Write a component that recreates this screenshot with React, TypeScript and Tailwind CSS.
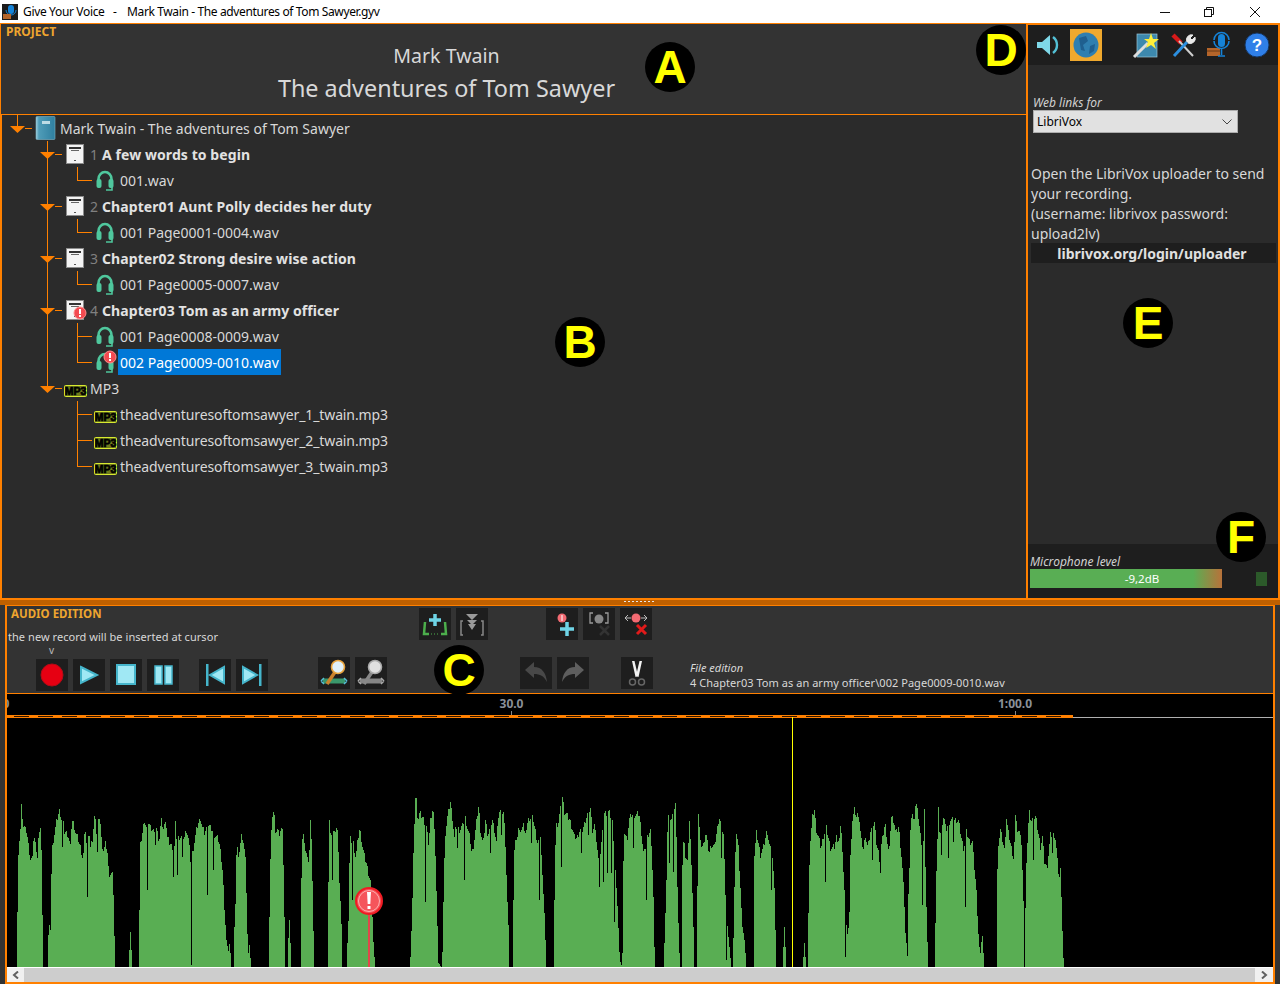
import React from "react";

const O = "#ff8000";

type Burst = [number, string];
const BURSTS: Burst[] = [
  [0, "48:560 51:395 54:215 57:180 60:150 63:80 67:120 70:150 76:130 78:155 82:180 85:205 90:240 94:240 97:210 100:165 104:190 108:210 112:240 115:150 120:140 123:210 126:405 129:560"],
  [0, "144:465 148:425 150:450 152:310 156:200 160:175 168:125 172:110 178:90 182:115 186:200 188:125 192:155 200:160 205:175 210:200 214:120 220:130 225:155 232:175 240:200 248:240 254:135 258:190 262:350 266:150 270:205 276:180 284:90 288:160 292:215 298:105 304:190 310:215 314:190 320:205 325:280 338:285 340:405 345:560"],
  [0, "387:510 390:455 393:510 396:560"],
  [0, "415:560 417:390 420:195 432:120 438:145 441:330 444:125 450:140 460:150 465:190 468:145 476:185 482:120 490:150 496:110 500:170 508:190 514:200 519:290 522:200 526:110 529:200 532:285 535:170 545:230 552:170 558:150 565:180 570:240 573:555 576:220 590:140 600:115 605:140 612:160 620:345 623:135 632:145 639:270 642:165 655:180 662:225 668:290 672:390 678:480 685:520 688:480 692:560"],
  [0, "699:560 702:440 706:350 709:160 713:250 717:210 724:160 730:190 736:250 740:430 743:525 747:495 752:560"],
  [0, "804:560 807:410 811:180 815:115 822:100 826:180 832:130 838:180 845:120 848:205 852:410 856:560"],
  [0, "863:490 867:420 870:490 873:560"],
  [0, "900:560 902:400 904:190 908:150 912:195 918:215 925:260 930:120 934:205 938:400 941:555"],
  [0, "981:560 983:400 986:120 992:170 996:300 999:145 1006:160 1012:140 1016:290 1022:400 1027:560"],
  [0, "1041:490 1045:400 1048:175 1056:360 1059:190 1066:235 1072:180 1078:145 1084:185 1090:220 1098:250 1105:285 1112:310 1120:510 1125:560"],
  [0, "1230:530 1235:400 1240:175 1246:30 1252:120 1258:100 1268:115 1275:365 1278:140 1284:190 1291:120"],
  [430, "0:120 8:80 14:195 20:400 24:550 33:560"],
  [430, "36:515 40:315 44:165 52:105 60:65 66:115 72:175 76:140 82:205 86:150 95:140 101:300 104:110 112:150 118:170 124:220 130:195 140:110 145:75 150:150 158:195 165:120 172:165 180:220 186:120 192:150 198:185 205:95 212:165 220:100 225:195 230:345 234:435 238:560"],
  [430, "247:560 250:260 254:170 260:180 266:140 272:165 278:115 284:175 290:130 296:115 302:190 308:115 316:160 322:190 327:360 330:165 336:285 342:400 348:560"],
  [430, "372:355 376:140 384:125 393:260 396:50 402:95 410:105 418:120 424:140 432:170 440:175 448:150 453:220 456:150 470:105 474:165 480:85 486:150 492:135 498:180 504:240 507:320 510:220 519:305 522:100 530:280 536:95 542:280 546:125 552:425 556:290 562:395 568:540 575:560"],
  [430, "576:520 580:150 590:180 596:120 602:105 608:205 618:105 626:100 632:150 640:225 648:360 651:170 660:150 668:300 672:500 676:560"],
  [430, "702:490 707:340 712:110 718:250 724:120 730:275 736:70 742:370 747:520 750:560"],
  [430, "753:560 756:260 760:150 766:255 772:230 778:110 784:280 788:400 792:560"],
  [430, "798:560 800:390 804:100 810:190 818:200 826:155 836:220 842:195 852:200 860:150 866:110 874:235 880:165 886:380 889:540 892:450 898:510 902:560"],
  [430, "908:560 910:390 914:250 918:155 924:200 930:325 936:440 942:480 948:560"],
  [430, "969:560 972:225 978:160 984:190 990:225 1000:200 1010:150 1016:190 1022:330 1026:235 1032:325 1036:490 1038:560"],
  [430, "1059:500 1062:440 1065:500 1068:560"],
  [430, "1119:530 1122:490 1125:530 1128:560"],
  [430, "1134:400 1138:205 1146:110 1152:90 1158:150 1166:180 1172:205 1178:170 1185:305 1188:145 1200:205 1212:200 1218:170 1226:185 1232:130 1238:260 1244:530 1250:470 1256:430 1262:230"],
  [850, "0:230 5:125 12:90 18:110 25:100 32:180 40:210 44:160 52:205 60:155 66:240 72:130 78:190 86:225 90:275 93:195 104:130 110:180 116:225 122:110 130:120 136:160 145:140 150:195 155:250 160:330 165:460 170:510 173:560"],
  [850, "175:340 180:160 184:90 190:130 196:65 204:110 212:185 216:375 219:185 222:95 226:310 232:520 234:560"],
  [850, "255:430 258:270 264:90 268:170 274:225 280:105 286:150 295:235 300:120 310:185 316:120 325:125 332:170 340:210 345:380 348:155 358:185 366:185 372:265 378:330 382:435 386:490 389:525 392:505 395:450 398:505 402:560"],
  [850, "438:560 440:300 444:190 450:150 456:180 462:210 468:115 474:160 480:190 490:240 496:90 502:170 508:140 514:210 518:350 521:560 524:430 528:240 536:95 542:125 550:240 556:110 562:150 570:200 576:170 582:245 590:265 600:165 606:220 614:165 620:230 626:300 630:265 634:380 638:525 642:560"],
];

// The envelope is sampled once per pixel with a small stable jitter; a sample far
// below both neighbours stays a one pixel wide notch.
function burstPath(off: number, s: string) {
  const raw = s.split(" ").map((p) => p.split(":").map(Number));
  const all = raw.map(([x, y]) => [off + x / 3, 780 + y / 3]);
  const notches = new Map<number, number>();
  const pts = all.filter((p, i) => {
    const a = all[i - 1];
    const b = all[i + 1];
    const n = a && b && p[1] > a[1] + 17 && p[1] > b[1] + 17;
    if (n) notches.set(Math.round(p[0]), p[1]);
    return !n;
  });
  const x0 = Math.round(pts[0][0]);
  const x1 = Math.round(pts[pts.length - 1][0]);
  let d = `M${x0} 967`;
  let k = 0;
  for (let x = x0; x < x1; x++) {
    while (k < pts.length - 2 && pts[k + 1][0] <= x) k++;
    const [ax, ay] = pts[k];
    const [bx, by] = pts[k + 1];
    const t = bx === ax ? 0 : Math.min(1, Math.max(0, (x - ax) / (bx - ax)));
    const h = (x * 2654435761) % 7;
    const jitter = ay < 900 && by < 900 ? h - 3 : 0;
    const y = notches.has(x) ? notches.get(x)! : Math.round(ay + (by - ay) * t + jitter);
    d += `L${x} ${y}L${x + 1} ${y}`;
  }
  return d + `L${x1} 967Z`;
}

const DASHES = Array.from({ length: 44 }, (_, i) => 7 + i * 24);

function Badge() {
  return (
    <g>
      <circle cx="0" cy="0" r="6" fill="#f24a50" stroke="#ff8a8a" strokeWidth="1" />
      <rect x="-1" y="-4" width="2" height="5" fill="#fff" />
      <rect x="-1" y="2" width="2" height="2" fill="#fff" />
    </g>
  );
}

function PageIcon({ x, y }: { x: number; y: number }) {
  return (
    <g transform={`translate(${x} ${y})`}>
      <rect x="0.5" y="0.5" width="17" height="19" fill="#f4f4f4" stroke="#8c8c8c" />
      <rect x="3" y="3" width="12" height="2" fill="#333" />
      <rect x="5" y="6" width="8" height="1" fill="#666" />
      <rect x="8" y="16" width="2" height="1" fill="#555" />
    </g>
  );
}

function Headset({ x, y }: { x: number; y: number }) {
  return (
    <g transform={`translate(${x} ${y})`} fill="none">
      <path d="M2.5 12 V9 a6.5 7 0 0 1 13 0 V12" stroke="#4fc79d" strokeWidth="2.6" />
      <rect x="0.5" y="9" width="5" height="9" rx="2" fill="#4fc79d" />
      <rect x="12.5" y="9" width="5" height="9" rx="2" fill="#4fc79d" />
      <path d="M16 17 V20 H10" stroke="#4fc79d" strokeWidth="1.6" />
    </g>
  );
}

function Mp3Icon({ x, y }: { x: number; y: number }) {
  return (
    <g transform={`translate(${x} ${y})`}>
      <rect x="0.5" y="0.5" width="22" height="11" rx="1" fill="#6f7a1c" stroke="#d8ea30" />
      <text x="11.5" y="10" textAnchor="middle" fontFamily="'Liberation Sans', sans-serif" fontWeight="700" fontSize="10.5" fill="#000" stroke="#000" strokeWidth="0.7">MP3</text>
    </g>
  );
}

function Arrow({ x }: { x: number }) {
  return <polygon points={`${x - 7.5},11 ${x + 7.5},11 ${x},18`} fill={O} />;
}

type RowKind = {
  kind: "root" | "chapter" | "file" | "mp3root" | "mp3file";
  text: string;
  num?: string;
  err?: boolean;
  last?: boolean;
  selected?: boolean;
  trunk?: boolean;
};

const ROWS: RowKind[] = [
  { kind: "root", text: "Mark Twain - The adventures of Tom Sawyer" },
  { kind: "chapter", num: "1", text: "A few words to begin" },
  { kind: "file", text: "001.wav", last: true, trunk: true },
  { kind: "chapter", num: "2", text: "Chapter01 Aunt Polly decides her duty" },
  { kind: "file", text: "001 Page0001-0004.wav", last: true, trunk: true },
  { kind: "chapter", num: "3", text: "Chapter02 Strong desire wise action" },
  { kind: "file", text: "001 Page0005-0007.wav", last: true, trunk: true },
  { kind: "chapter", num: "4", text: "Chapter03 Tom as an army officer", err: true },
  { kind: "file", text: "001 Page0008-0009.wav", trunk: true },
  { kind: "file", text: "002 Page0009-0010.wav", last: true, err: true, selected: true, trunk: true },
  { kind: "mp3root", text: "MP3" },
  { kind: "mp3file", text: "theadventuresoftomsawyer_1_twain.mp3" },
  { kind: "mp3file", text: "theadventuresoftomsawyer_2_twain.mp3" },
  { kind: "mp3file", text: "theadventuresoftomsawyer_3_twain.mp3", last: true },
];

function Gutter({ r }: { r: RowKind }) {
  const w = r.kind === "root" ? 60 : r.kind === "chapter" || r.kind === "mp3root" ? 90 : 118;
  return (
    <svg width={w} height={26} className="shrink-0 overflow-visible">
      {r.kind === "root" && (
        <g>
          <rect x="17" y="0" width="1" height="11" fill={O} />
          <Arrow x={17.5} />
          <rect x="25" y="13" width="7" height="1" fill={O} />
          <defs>
            <linearGradient id="bk" x1="0" x2="1">
              <stop offset="0" stopColor="#9fd0df" />
              <stop offset="0.15" stopColor="#4f9cb8" />
              <stop offset="1" stopColor="#2f7f9f" />
            </linearGradient>
          </defs>
          <rect x="36" y="1.5" width="19" height="23" rx="1" fill="url(#bk)" stroke="#7fb5c8" strokeWidth="0.6" />
          <rect x="42" y="6" width="8" height="3" fill="#bcdbe5" />
        </g>
      )}
      {(r.kind === "chapter" || r.kind === "mp3root") && (
        <g>
          <rect x="47" y="0" width="1" height={r.kind === "mp3root" ? 13 : 26} fill={O} />
          <Arrow x={47.5} />
          <rect x="55" y="13" width="7" height="1" fill={O} />
        </g>
      )}
      {r.kind === "chapter" && <PageIcon x={66} y={3} />}
      {r.kind === "chapter" && r.err && (
        <g transform="translate(80 16)">
          <Badge />
        </g>
      )}
      {r.kind === "mp3root" && <Mp3Icon x={64} y={10} />}
      {(r.kind === "file" || r.kind === "mp3file") && (
        <g>
          {r.trunk && <rect x="47" y="0" width="1" height="26" fill={O} />}
          <rect x="77" y="0" width="1" height={r.last ? 14 : 26} fill={O} />
          <rect x="77" y="13" width="15" height="1" fill={O} />
        </g>
      )}
      {r.kind === "file" && <Headset x={96} y={3} />}
      {r.kind === "file" && r.err && (
        <g transform="translate(110 8)">
          <Badge />
        </g>
      )}
      {r.kind === "mp3file" && <Mp3Icon x={94} y={10} />}
    </svg>
  );
}

function TreeRow({ r }: { r: RowKind }) {
  const bold = r.kind === "chapter";
  return (
    <div className="flex h-[26px] items-center">
      <Gutter r={r} />
      {r.num && <span className="mr-[4px] text-[#808080]">{r.num}</span>}
      <span
        className={
          r.selected
            ? "flex h-[26px] items-center bg-[#0078d7] px-[2px] text-white"
            : bold
              ? "font-bold tracking-[0.08px] text-[#e2e2e2]"
              : r.kind === "mp3file"
                ? "px-[2px] tracking-[-0.11px] text-[#d8d8d8]"
                : r.kind === "file"
                  ? "px-[2px] text-[#d8d8d8]"
                  : "text-[#d8d8d8]"
        }
      >
        {r.text}
      </span>
    </div>
  );
}

function Btn({ children, className = "" }: { children: React.ReactNode; className?: string }) {
  return (
    <div className={"h-[32px] w-[32px] shrink-0 bg-[#1e1e1e] " + className}>
      <svg width="32" height="32" viewBox="0 0 32 32">
        {children}
      </svg>
    </div>
  );
}

const CY = "#a0e8f4";
const CS = "#45b5cb";

function Letter({ c, className }: { c: string; className: string }) {
  return (
    <div className={"absolute flex h-[50px] w-[50px] items-center justify-center rounded-full bg-black text-[46px] font-bold leading-none text-[#ffff00] font-['Liberation_Sans',sans-serif] " + className}>
      {c}
    </div>
  );
}

function PersonZoom({ grey }: { grey?: boolean }) {
  return (
    <g>
      <path d="M5 24 L27 24" stroke={grey ? "#999" : "#3fae7a"} strokeWidth="5" opacity="0.85" />
      <path d="M3 24 l3 -3 M3 24 l3 3 M29 24 l-3 -3 M29 24 l-3 3" stroke={grey ? "#aaa" : "#55c0d8"} strokeWidth="1.5" fill="none" />
      <path d="M9 27 L17 15" stroke={grey ? "#888" : "#c9822d"} strokeWidth="3.5" />
      <circle cx="20" cy="10" r="6.5" fill={grey ? "#e0e0e0" : "#e0f0f8"} stroke={grey ? "#aaa" : "#e8a33c"} strokeWidth="1.6" />
    </g>
  );
}

export default function App() {
  return (
    <div className="relative flex h-[984px] w-[1280px] flex-col overflow-hidden bg-[#333333] font-['Noto_Sans',sans-serif] text-[14px]">
      {/* title bar */}
      <div className="flex h-[23px] shrink-0 items-center bg-white text-[12px] text-black">
        <svg width="16" height="16" viewBox="0 0 16 16" className="ml-[2px] shrink-0">
          <rect width="16" height="16" fill="#1b1b1b" />
          <rect x="6" y="1" width="6" height="9" rx="3" fill="#1583d8" />
          <path d="M4 6 a5 5 0 0 0 10 0" stroke="#1583d8" fill="none" />
          <rect x="1" y="10" width="8" height="5" fill="#b5652a" />
        </svg>
        <span className="ml-[5px] w-[90px] shrink-0 tracking-[-0.34px]">Give Your Voice</span>
        <span className="w-[14px] shrink-0">-</span>
        <span className="tracking-[-0.37px]">Mark Twain - The adventures of Tom Sawyer.gyv</span>
        <div className="ml-auto flex items-center">
          <svg width="12" height="12" className="mr-[32px]"><rect x="1" y="6" width="10" height="1" fill="#111" /></svg>
          <svg width="12" height="12" className="mr-[34px]" fill="none" stroke="#111"><rect x="1.5" y="3.5" width="7" height="7" /><path d="M3.5 3.5 V1.5 H10.5 V8.5 H8.5" /></svg>
          <svg width="12" height="12" className="mr-[19px]" stroke="#111"><path d="M1 1 L11 11 M11 1 L1 11" /></svg>
        </div>
      </div>

      {/* main row */}
      <div className="flex h-[575px] shrink-0">
        <div className="flex w-[1026px] shrink-0 flex-col border-t border-[#ff8000]">
          <div className="flex h-[91px] shrink-0 flex-col border-b border-l border-[#ff8000] bg-[#333333]">
            <div className="h-[16px] pl-[5px] pt-[1px] text-[12px] font-bold leading-[14px] text-[#eea52f]">PROJECT</div>
            <div className="mt-[1px] pr-[134px] text-center text-[19.6px] leading-[30px] text-[#d8d8d8]">Mark Twain</div>
            <div className="pr-[134px] text-center text-[23.4px] leading-[34px] text-[#d8d8d8]">The adventures of Tom Sawyer</div>
          </div>
          <div className="flex-1 border-l-2 border-[#ff8000] bg-[#2b2b2b]">
            <div className="-ml-[2px]">
              {ROWS.map((r, i) => (
                <TreeRow key={i} r={r} />
              ))}
            </div>
          </div>
        </div>

        <div className="flex w-[254px] shrink-0 flex-col border-x-2 border-t-2 border-[#ff8000] bg-[#2b2b2b] text-[#d8d8d8]">
          <div className="flex h-[40px] shrink-0 items-center bg-[#1e1e1e]">
            <svg width="28" height="28" viewBox="0 0 28 28" className="ml-[7px]">
              <path d="M2 11 H7 L15 4 V24 L7 17 H2 Z" fill="#7fd8e8" />
              <path d="M18 6 a10 10 0 0 1 0 16" stroke="#53c0d5" strokeWidth="2.4" fill="none" />
            </svg>
            <div className="ml-[7px] flex h-[32px] w-[32px] items-center justify-center bg-[#f0a92e]">
              <svg width="26" height="26" viewBox="0 0 26 26">
                <circle cx="13" cy="13" r="12.5" fill="#2f7fb0" />
                <path d="M6 6 L13 4 L15 9 L10 13 L12 19 L8 18 Z M17 14 L22 12 L21 19 L16 22 Z" fill="#1f5f8f" />
              </svg>
            </div>
            <svg width="28" height="28" viewBox="0 0 28 28" className="ml-[30px]">
              <rect x="5" y="3" width="20" height="23" fill="#3d89ae" stroke="#9cc6d6" strokeWidth="0.7" />
              <path d="M2 26 L16 12" stroke="#ddd" strokeWidth="3" />
              <polygon points="19,2 21,8 27,8 22,12 24,18 19,14 14,17 16,11 12,8 17,8" fill="#ffef3a" />
            </svg>
            <svg width="28" height="28" viewBox="0 0 28 28" className="ml-[9px]">
              <path d="M4 4 L12 12" stroke="#d81a1a" strokeWidth="4.5" />
              <path d="M10 10 L24 25" stroke="#cfcfcf" strokeWidth="2" />
              <path d="M5 25 L18 11" stroke="#2c8fe0" strokeWidth="3" />
              <path d="M18 11 a5 5 0 0 1 6 -7 l-3 3 l2 2 l3 -3 a5 5 0 0 1 -7 6" fill="#e8e8e8" stroke="#e8e8e8" />
            </svg>
            <svg width="28" height="28" viewBox="0 0 28 28" className="ml-[9px]">
              <rect x="1" y="17" width="13" height="8" fill="#b5652a" />
              <path d="M1 20 H14" stroke="#6b3a14" />
              <rect x="12" y="3" width="7" height="13" rx="3.5" fill="#1583d8" />
              <path d="M8 10 a7.5 7.5 0 0 0 15 0 M8 9 a7.5 7.5 0 0 1 15 0 M15.5 18 V24 M12 25 H19" stroke="#1583d8" strokeWidth="1.6" fill="none" />
            </svg>
            <svg width="26" height="26" viewBox="0 0 26 26" className="ml-[10px]">
              <circle cx="13" cy="13" r="12" fill="#2f7fe8" stroke="#15345e" />
              <text x="13" y="19" textAnchor="middle" fontFamily="'Liberation Sans', sans-serif" fontWeight="700" fontSize="17" fill="#fff">?</text>
            </svg>
          </div>
          <div className="mt-[30px] h-[15px] pl-[5px] text-[12px] italic leading-[16px] text-[#d0d0d0]">Web links for</div>
          <div className="ml-[5px] flex h-[23px] w-[205px] items-center justify-between border border-[#adadad] bg-[#e1e1e1] pl-[3px] pr-[5px] text-[12px] text-black">
            <span>LibriVox</span>
            <svg width="10" height="6" fill="none" stroke="#444"><path d="M0.5 0.5 L5 5 L9.5 0.5" /></svg>
          </div>
          <div className="ml-[3px] mt-[31px] leading-[20px] text-[#d8d8d8]">
            Open the LibriVox uploader to send<br />your recording.<br />(username: librivox password:<br />upload2lv)
          </div>
          <div className="-mt-[1px] ml-[3px] mr-[2px] flex h-[20px] items-center justify-center bg-[#1e1e1e] pr-[3px] font-bold text-[#e0e0e0]">librivox.org/login/uploader</div>
          <div className="mt-auto flex h-[54px] shrink-0 flex-col bg-[#1e1e1e] pl-[2px]">
            <div className="mt-[11px] text-[12px] italic leading-[14px] text-[#d0d0d0]">Microphone level</div>
            <div className="flex items-center">
              <div className="flex h-[19px] w-[192px] items-center justify-center bg-[linear-gradient(to_right,#59ae54_0%,#59ae54_85%,#b8723a_100%)] pl-[32px] text-[11.5px] text-white">-9,2dB</div>
              <div className="ml-[34px] h-[14px] w-[11px] bg-[#2c5a2a]" />
            </div>
          </div>
        </div>
      </div>

      {/* splitter */}
      <div className="relative h-[7px] shrink-0 border-t-2 border-[#ff8000] bg-[#bf6000]">
        <div className="mx-auto mt-[1px] h-[1px] w-[32px] bg-[repeating-linear-gradient(to_right,#e8e8e8_0,#e8e8e8_2px,transparent_2px,transparent_4px)]" />
      </div>

      {/* audio panel */}
      <div className="ml-[5px] mr-[5px] flex flex-1 flex-col border-b-2 border-l-2 border-r-2 border-t border-[#ff8000] bg-[#333333]">
        <div className="relative h-[87px] shrink-0 -ml-[1px]">
          <div className="flex h-[51px]">
            <div className="w-[413px] shrink-0 text-[12px]">
              <div className="pl-[5px] text-[11.5px] font-bold leading-[16px] text-[#eea52f]">AUDIO EDITION</div>
              <div className="mt-[8px] pl-[2px] text-[11px] leading-[14px] tracking-[0.05px] text-[#d8d8d8]">the new record will be inserted at cursor</div>
              <div className="pl-[43px] text-[10px] leading-[12px] text-[#bbb]">v</div>
            </div>
            <div className="flex gap-[5px] pt-[2px]">
              <Btn>
                <path d="M6 14 L5 26 H10 M26 14 L27 26 H22" stroke="#4cae4c" strokeWidth="2.5" fill="none" />
                <path d="M16 6 V18 M10 12 H22" stroke="#6fd4e6" strokeWidth="3.5" />
                <path d="M12 26 H20" stroke="#4cae4c" strokeDasharray="1 2" />
              </Btn>
              <Btn>
                <path d="M10 6 H22 L16 12 Z M11 12 H21 L16 17 Z M12 16 H20 L16 22 Z" fill="#9a9a9a" />
                <path d="M7 13 H5 V27 H7 M25 13 H27 V27 H25" stroke="#888" strokeWidth="1.5" fill="none" />
              </Btn>
            </div>
            <div className="ml-[58px] flex gap-[5px] pt-[2px]">
              <Btn>
                <circle cx="16" cy="10" r="4.5" fill="#f26a72" />
                <rect x="15.5" y="7" width="1" height="6" fill="#fff" />
                <path d="M21 14 V28 M14 21 H28" stroke="#6fd4e6" strokeWidth="3.5" />
              </Btn>
              <Btn>
                <circle cx="16" cy="11" r="4.5" fill="#888" />
                <path d="M10 5 H7 V15 H10 M22 5 H25 V15 H22" stroke="#999" strokeWidth="1.3" fill="none" />
                <path d="M17 18 L26 27 M26 18 L17 27" stroke="#333" strokeWidth="2.5" />
              </Btn>
              <Btn>
                <circle cx="16" cy="10" r="4.5" fill="#f26a72" />
                <path d="M5 10 H11 M21 10 H27 M5 10 l3 -3 M5 10 l3 3 M27 10 l-3 -3 M27 10 l-3 3" stroke="#bbb" strokeWidth="1" fill="none" />
                <path d="M17 17 L26 26 M26 17 L17 26" stroke="#e01a1a" strokeWidth="3" />
              </Btn>
            </div>
          </div>
          <div className="flex h-[36px]">
            <div className="ml-[30px] mt-[2px] flex gap-[5px]">
              <Btn><circle cx="16" cy="16" r="11" fill="#e60012" stroke="#b40b16" /></Btn>
              <Btn><polygon points="8,8 24,16 8,24" fill={CY} stroke={CS} strokeWidth="2" /></Btn>
              <Btn><rect x="7" y="6" width="18" height="19" fill={CY} stroke={CS} strokeWidth="2" /></Btn>
              <Btn>
                <rect x="8" y="7" width="7" height="18" fill={CY} stroke={CS} strokeWidth="1.5" />
                <rect x="18" y="7" width="7" height="18" fill={CY} stroke={CS} strokeWidth="1.5" />
              </Btn>
            </div>
            <div className="ml-[20px] mt-[2px] flex gap-[5px]">
              <Btn><rect x="7" y="5" width="2.5" height="22" fill={CS} /><polygon points="25,8 25,24 11,16" fill={CY} stroke={CS} strokeWidth="2" /></Btn>
              <Btn><rect x="23" y="5" width="2.5" height="22" fill={CS} /><polygon points="7,8 7,24 21,16" fill={CY} stroke={CS} strokeWidth="2" /></Btn>
            </div>
            <div className="ml-[50px] flex gap-[5px]">
              <Btn><PersonZoom /></Btn>
              <Btn><PersonZoom grey /></Btn>
            </div>
            <div className="ml-[133px] flex gap-[5px]">
              <Btn><path d="M5 13 L14 5 V10 C22 10 26 16 27 25 C24 19 20 17 14 17 V21 Z" fill="#484848" /></Btn>
              <Btn><path d="M27 13 L18 5 V10 C10 10 6 16 5 25 C8 19 12 17 18 17 V21 Z" fill="#5e5e5e" /></Btn>
            </div>
            <div className="ml-[32px]">
              <Btn>
                <path d="M11 4 L13.5 4 L17 19 L14.5 20 Z" fill="#f2f2f2" />
                <path d="M21 4 L18.5 4 L15 19 L17.5 20 Z" fill="#f2f2f2" />
                <circle cx="11.5" cy="25" r="3" fill="none" stroke="#666" strokeWidth="1.5" />
                <circle cx="20.5" cy="25" r="3" fill="none" stroke="#666" strokeWidth="1.5" />
              </Btn>
            </div>
            <div className="ml-[37px] mt-[3px] text-[11px] leading-[15px] text-[#d8d8d8]">
              <div className="italic">File edition</div>
              <div className="tracking-[0.04px]">4 Chapter03 Tom as an army officer\002 Page0009-0010.wav</div>
            </div>
          </div>
        </div>

        <div className="h-[1px] shrink-0 bg-[#ff8000]" />
        <svg width="1266" height="273" viewBox="7 694 1266 273" className="block shrink-0 bg-black" shapeRendering="crispEdges">
          <rect x="1073" y="717" width="200" height="1" fill="#b0b0b0" />
          <rect x="7" y="715" width="1066" height="3" fill={O} />
          {DASHES.map((x) => (
            <rect key={x} x={x + 7} y="716" width="15" height="1" fill="#2a1400" />
          ))}
          <rect x="511" y="711" width="1" height="4" fill="#888" />
          <rect x="1015" y="711" width="1" height="4" fill="#888" />
          <g fontFamily="'Noto Sans', sans-serif" fontWeight="700" fontSize="12" fill="#8a9098" textAnchor="middle">
            <text x="511.5" y="708" shapeRendering="auto">30.0</text>
            <text x="1015" y="708" shapeRendering="auto">1:00.0</text>
            <text x="6" y="708" shapeRendering="auto">0</text>
          </g>
          {BURSTS.map(([off, s], i) => (
            <path key={i} d={burstPath(off, s)} fill="#59ae53" />
          ))}
          <rect x="792" y="717" width="1" height="250" fill="#ffff00" />
          <rect x="368" y="914" width="2" height="53" fill="#e2474b" />
          <g shapeRendering="auto">
            <circle cx="369" cy="901" r="13" fill="#f5555b" stroke="#f01c24" strokeWidth="2" />
            <circle cx="369" cy="901" r="10.5" fill="none" stroke="#ffb0b0" strokeWidth="1" />
            <path d="M367 892 H371 L370.3 904 H367.7 Z" fill="#fff" />
            <rect x="367.5" y="906" width="3" height="3" fill="#fff" />
          </g>
        </svg>
        <div className="flex h-[15px] shrink-0 items-center justify-between border-t border-white bg-[#cdcdcd]">
          <div className="flex h-[14px] w-[17px] items-center justify-center bg-[#f0f0f0]">
            <svg width="8" height="8" fill="none" stroke="#606060" strokeWidth="2"><path d="M6 0.5 L2 4 L6 7.5" /></svg>
          </div>
          <div className="flex h-[14px] w-[18px] items-center justify-center bg-[#f0f0f0]">
            <svg width="8" height="8" fill="none" stroke="#606060" strokeWidth="2"><path d="M2 0.5 L6 4 L2 7.5" /></svg>
          </div>
        </div>
      </div>

      <Letter c="A" className="left-[645px] top-[42px]" />
      <Letter c="B" className="left-[555px] top-[317px]" />
      <Letter c="C" className="left-[434px] top-[645px]" />
      <Letter c="D" className="left-[976px] top-[25px]" />
      <Letter c="E" className="left-[1123px] top-[298px]" />
      <Letter c="F" className="left-[1216px] top-[512px]" />
    </div>
  );
}
